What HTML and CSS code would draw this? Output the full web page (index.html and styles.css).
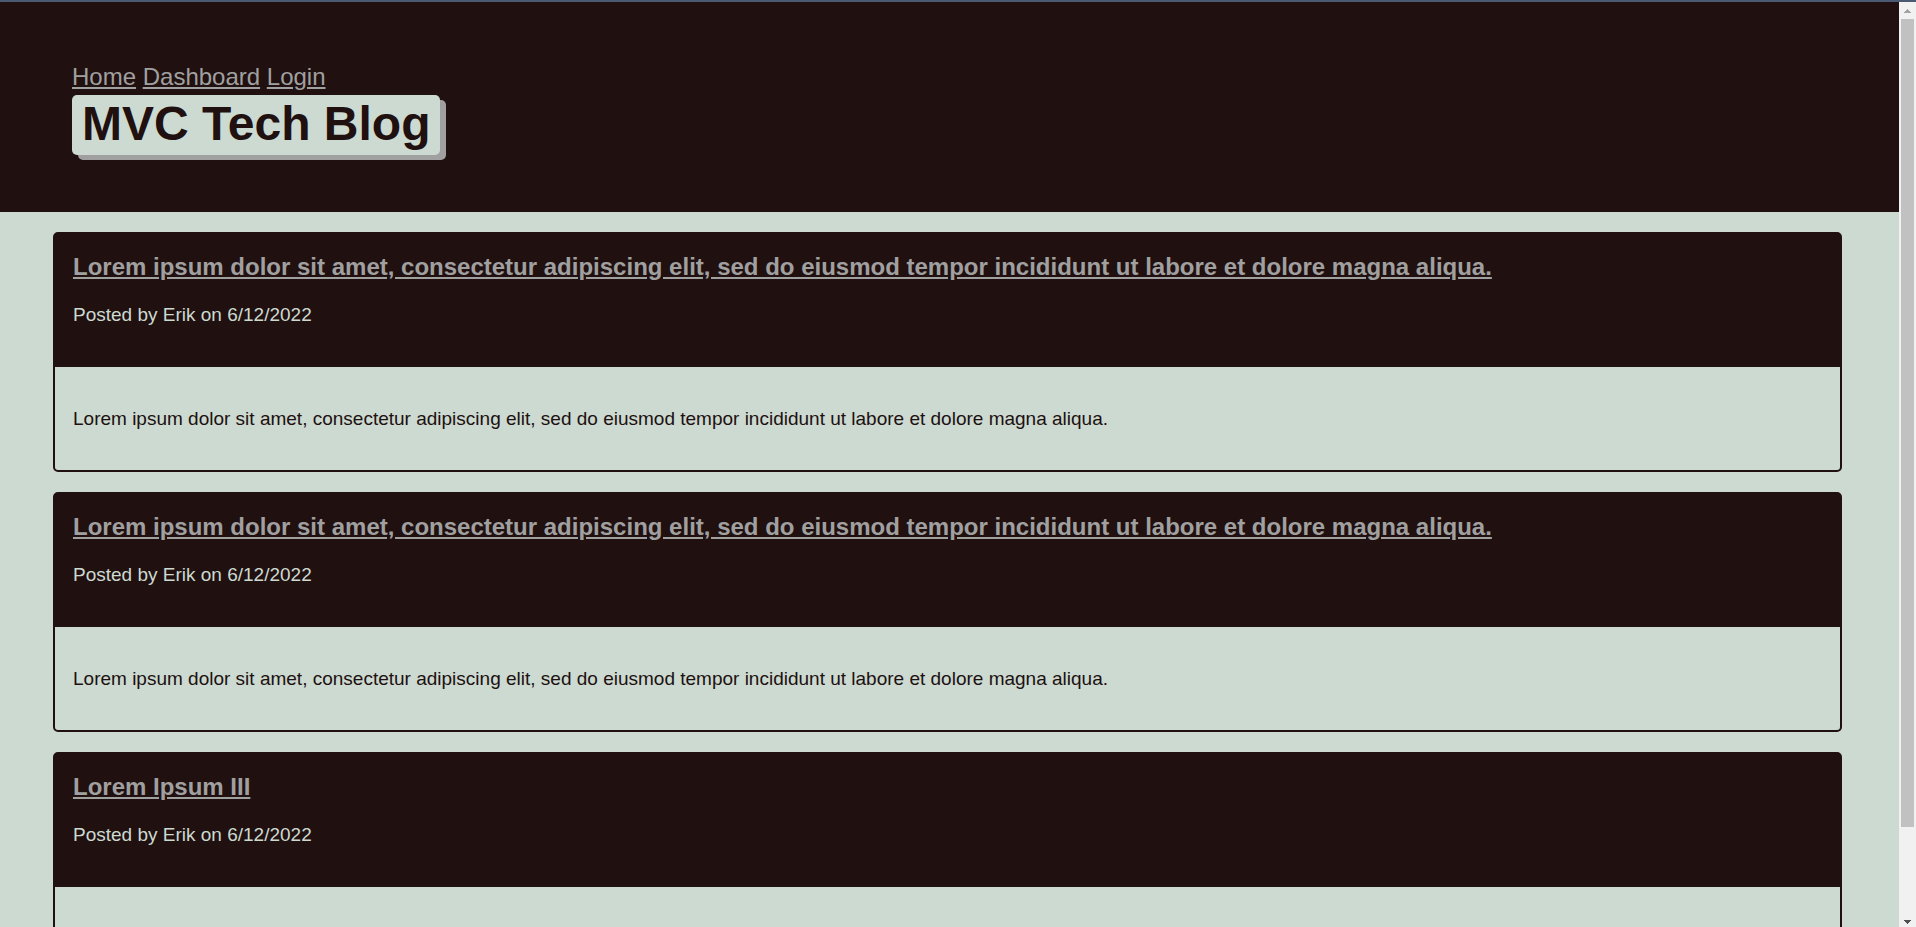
FILE: index.html
```html
<!DOCTYPE html>
<html lang="en">
<head>
<meta charset="utf-8">
<title>MVC Tech Blog</title>
<link rel="stylesheet" href="styles.css">
</head>
<body>
<div class="window">
  <div class="page">
    <header class="site-header">
      <nav class="site-nav">
        <a href="#home">Home</a>
        <a href="#dashboard">Dashboard</a>
        <a href="#login">Login</a>
      </nav>
      <h1 class="site-title">MVC Tech Blog</h1>
    </header>
    <main class="posts">
      <article class="card">
        <header class="card-header">
          <h2 class="card-title"><a href="#post-1">Lorem ipsum dolor sit amet, consectetur adipiscing elit, sed do eiusmod tempor incididunt ut labore et dolore magna aliqua.</a></h2>
          <p class="card-meta">Posted by Erik on 6/12/2022</p>
        </header>
        <div class="card-body">
          <p class="card-text">Lorem ipsum dolor sit amet, consectetur adipiscing elit, sed do eiusmod tempor incididunt ut labore et dolore magna aliqua.</p>
        </div>
      </article>
      <article class="card">
        <header class="card-header">
          <h2 class="card-title"><a href="#post-2">Lorem ipsum dolor sit amet, consectetur adipiscing elit, sed do eiusmod tempor incididunt ut labore et dolore magna aliqua.</a></h2>
          <p class="card-meta">Posted by Erik on 6/12/2022</p>
        </header>
        <div class="card-body">
          <p class="card-text">Lorem ipsum dolor sit amet, consectetur adipiscing elit, sed do eiusmod tempor incididunt ut labore et dolore magna aliqua.</p>
        </div>
      </article>
      <article class="card">
        <header class="card-header">
          <h2 class="card-title"><a href="#post-3">Lorem Ipsum III</a></h2>
          <p class="card-meta">Posted by Erik on 6/12/2022</p>
        </header>
        <div class="card-body"></div>
      </article>
    </main>
  </div>
  <div class="scrollbar" aria-hidden="true">
    <svg class="arrow arrow-up" viewBox="0 0 17 17" shape-rendering="crispEdges"><path d="M8 7h1v1h1v1h1v1h1v1H5v-1h1V9h1V8h1z"/></svg>
    <div class="track"><div class="thumb"></div></div>
    <svg class="arrow arrow-down" viewBox="0 0 17 17" shape-rendering="crispEdges"><path d="M5 10h7v1h-1v1h-1v1H9v1H8v-1H7v-1H6v-1H5z"/></svg>
  </div>
</div>
</body>
</html>
```
FILE: styles.css
```css
:root {
  --dark: #201010;
  --mint: #ccdad1;
  --gray: #a0a0a0;
}

* {
  box-sizing: border-box;
}

body {
  margin: 0;
  background: var(--mint);
  color: var(--dark);
  font-family: "Liberation Sans", Arial, sans-serif;
}

.window {
  display: flex;
  height: 100vh;
  border-top: 2px solid #4b5a73;
}

.page {
  flex: 1;
  min-width: 0;
  overflow: hidden;
}

.site-header {
  padding: 60px 72px 57px;
  background: var(--dark);
}

.site-nav {
  padding-bottom: 4px;
  font-size: 24px;
  line-height: 29px;
}

a {
  color: var(--gray);
}

.site-title {
  width: fit-content;
  margin: 0;
  padding: 0 10px 2px;
  border-radius: 5px;
  background: var(--mint);
  box-shadow: 6px 5px 0 var(--gray);
  font-size: 48px;
  line-height: 58px;
}

.posts {
  display: flex;
  flex-direction: column;
  gap: 20px;
  padding: 20px 57px 20px 53px;
}

.card {
  border: 2px solid var(--dark);
  border-radius: 5px;
}

.card-header {
  padding: 18px 18px 38px;
  background: var(--dark);
  color: var(--mint);
}

.card-title {
  margin: 0 0 18px;
  font-size: 24px;
  line-height: 30px;
}

.card-meta,
.card-text {
  margin: 0;
  font-size: 19px;
  line-height: 29px;
}

.card-body {
  min-height: 103px;
  padding: 37px 18px;
}

.scrollbar {
  display: flex;
  flex-direction: column;
  width: 17px;
  background: #f1f1f1;
}

.arrow {
  width: 17px;
  height: 17px;
}

.arrow-up {
  fill: #a3a3a3;
}

.arrow-down {
  fill: #505050;
}

.track {
  flex: 1;
  padding: 0 2px;
}

.thumb {
  height: 90.7%;
  background: #c1c1c1;
}
```
